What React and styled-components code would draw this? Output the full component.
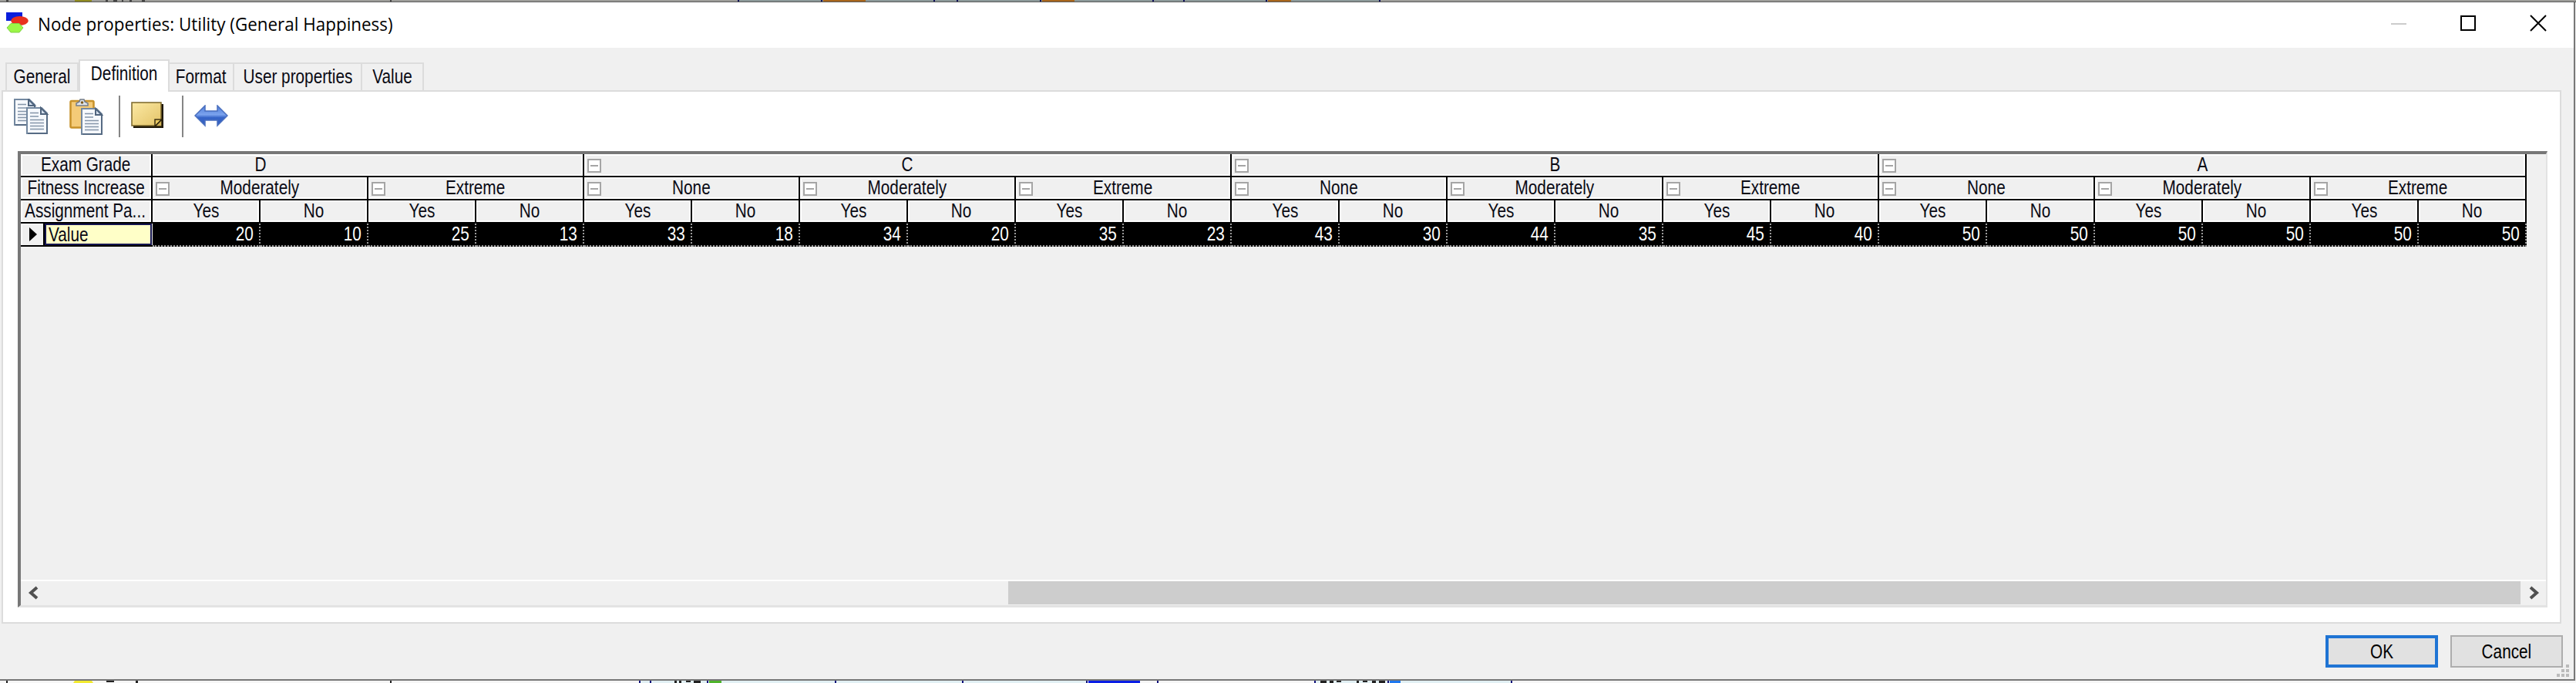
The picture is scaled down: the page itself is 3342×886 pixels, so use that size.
import React from "react";
import styled, { createGlobalStyle } from "styled-components";

const Global = createGlobalStyle`
  *, *::before, *::after { box-sizing: border-box; }
  body { margin: 0; background: #f0f0f0; font-family: "Liberation Sans", Arial, sans-serif; font-size: 25px; line-height: 26px; color: #0a0a14; }
`;

const Screen = styled.div`
  width: 3342px;
  height: 886px;
  display: flex;
  flex-direction: column;
  overflow: hidden;
`;

const Strip = styled.div`
  height: 3px;
  flex: none;
  background: ${(p) => p.$bg};
  overflow: hidden;
  svg { display: block; }
`;

const Window = styled.div`
  flex: 1;
  min-height: 0;
  width: 3341px;
  display: flex;
  flex-direction: column;
  background: #f0f0f0;
  border-right: 2px solid #777;
  border-bottom: 2px solid #777;
`;

const Text = styled.span`
  display: inline-block;
  white-space: pre;
  transform: scaleX(${(p) => p.$sx || 0.83});
  transform-origin: ${(p) => p.$origin || "center"} center;
`;

const TitleBar = styled.header`
  height: 59px;
  flex: none;
  display: flex;
  align-items: center;
  background: #fff;
  padding: 0 35px 5px 7px;
`;

const Title = styled.h1`
  margin: 2px auto 0 12px;
  width: 480px;
  font: 400 24px/34px "Open Sans", sans-serif;
  color: #000;
`;

const Controls = styled.div`
  display: flex;
  gap: 70px;
  svg { display: block; }
`;

const Tabs = styled.nav`
  height: 55px;
  flex: none;
  display: flex;
  align-items: flex-end;
  padding-left: 7px;
`;

const Tab = styled.div`
  width: ${(p) => p.$w}px;
  height: ${(p) => (p.$active ? 42 : 36)}px;
  margin-bottom: ${(p) => (p.$active ? -2 : 0)}px;
  padding-top: 3px;
  position: relative;
  display: flex;
  justify-content: center;
  background: ${(p) => (p.$active ? "#fff" : "#f0f0f0")};
  border: 2px solid #dcdcdc;
  border-bottom: 0;
  border-left-width: ${(p) => (p.$first || p.$active ? 2 : 0)}px;
`;

const Panel = styled.main`
  width: 3321px;
  height: 692px;
  flex: none;
  margin-left: 2px;
  display: flex;
  flex-direction: column;
  background: #fff;
  border: 2px solid #dcdcdc;
`;

const Toolbar = styled.div`
  height: 77px;
  flex: none;
  display: flex;
  align-items: flex-start;
  padding: 5px 0 0 14px;
`;

const Tool = styled.div`
  margin: ${(p) => p.$drop}px ${(p) => p.$after || 0}px 0 0;
  svg { display: block; }
`;

const Sep = styled.div`
  width: 2px;
  height: 54px;
  background: #858585;
  margin: 0 14px 0 ${(p) => p.$l}px;
`;

const Frame = styled.section`
  width: 3282px;
  height: 592px;
  margin-left: 19px;
  display: flex;
  flex-direction: column;
  justify-content: space-between;
  border: solid;
  border-width: 4px 2px 3px 4px;
  border-color: #777 #e3e3e3 #e3e3e3 #777;
  background: #f0f0f0;
`;

const Sheet = styled.div`
  width: 3251px;
  display: grid;
  grid-template-columns: 171px repeat(22, 140px);
  grid-template-rows: repeat(4, 30px);
`;

const HeadCell = styled.div`
  grid-column: span ${(p) => p.$span || 1};
  display: grid;
  grid-template-areas: "cell";
  grid-template-columns: 100%;
  align-items: start;
  justify-items: center;
  border-right: 2px solid #000;
  border-bottom: 2px solid #000;
  box-shadow: inset 2px 2px #fff, inset -2px -2px #fff;
  padding-right: ${(p) => p.$tail || 0}px;
  > * { grid-area: cell; }
`;

const Toggle = styled.i`
  justify-self: start;
  width: 18px;
  height: 18px;
  margin: 6px 0 0 4px;
  border: 2px solid #a5a5a5;
  background: #fff;
  display: grid;
  place-items: center;
  &::before { content: ""; width: 10px; height: 2px; background: #a5a5a5; }
`;

const RowHead = styled.div`
  display: flex;
  border-bottom: 2px solid #000;
`;

const Marker = styled.div`
  width: 31px;
  display: grid;
  place-items: center;
  padding-left: 2px;
  border-right: 2px solid #000;
  box-shadow: inset 2px 2px #fff;
`;

const RowName = styled.div`
  flex: 1;
  background: #ffffc8;
  border: 2px solid #141450;
  margin-right: 1px;
  padding-left: 3px;
  line-height: 24px;
`;

const ValueCell = styled.div`
  background: #000;
  color: #fff;
  text-align: right;
  padding-right: 7px;
  line-height: 27px;
  border-right: 2px dotted #999;
  border-bottom: 2px dotted #999;
`;

const ScrollBar = styled.div`
  height: 33px;
  display: flex;
  align-items: center;
  border-top: 2px solid #fff;
  padding-bottom: 1px;
  svg { display: block; flex: none; }
`;

const Thumb = styled.div`
  width: 1962px;
  height: 30px;
  background: #cdcdcd;
  margin: 0 11px 0 auto;
`;

const Footer = styled.footer`
  flex: 1;
  display: flex;
  align-items: flex-start;
  justify-content: flex-end;
  padding: 15px 6px 0 0;
`;

const Button = styled.button`
  width: 146px;
  height: 42px;
  margin-right: ${(p) => p.$gap || 0}px;
  padding: 0;
  border: ${(p) => (p.$primary ? "4px solid #1f74d4" : "2px solid #adadad")};
  background: #e1e1e1;
  font: inherit;
  color: #000;
`;

const Grip = styled.svg`
  margin: 38px 0 0 -8px;
`;

const Line = styled.path`
  fill: none;
  stroke: ${(p) => p.$c};
  stroke-width: ${(p) => p.$w || 2};
`;

const AppIcon = () => (
  <svg width="30" height="32" viewBox="0 0 30 32">
    <rect x="1" y="2" width="21" height="11" fill="#0a1edc" />
    <ellipse cx="18.500" cy="13" rx="11.300" ry="6" fill="#e8301e" />
    <path d="M7 16.500h11l5 5.500-5 6H7l-5-6z" fill="#9bf646" stroke="#7fd046" />
  </svg>
);

const Page = ({ x, y }) => (
  <g transform={`translate(${x} ${y})`}>
    <path d="M1 1h19l7 7v26H1z" fill="#f6f9fd" stroke="#7388a0" strokeWidth="2" />
    <path d="M27 8v26H2" fill="none" stroke="#566b84" strokeWidth="2" />
    <path d="M19 1v8h8z" fill="#d5e1ee" stroke="#50657e" strokeWidth="2" />
    <path d="M5 7.500h11M5 12h11M5 16.500h18M5 20.500h18M5 24.500h18M5 28.500h18" stroke="#8495a9" strokeWidth="1.500" />
  </g>
);

const CopyIcon = () => (
  <svg width="46" height="48" viewBox="0 0 46 48">
    <Page x={0} y={0} />
    <Page x={16} y={11} />
  </svg>
);

const PasteIcon = () => (
  <svg width="44" height="48" viewBox="0 0 44 48">
    <rect x="1.500" y="3" width="30" height="34.500" rx="1.500" fill="#f4cb78" stroke="#c8922a" strokeWidth="2.500" />
    <path d="M9 9V6l4-2 1-3h5l1 3 4 2v3z" fill="#dfe4ea" stroke="#737c89" strokeWidth="1.500" />
    <circle cx="16.500" cy="5" r="1.800" fill="#7a5a20" />
    <Page x={15} y={12} />
  </svg>
);

const NoteIcon = () => (
  <svg width="44" height="36" viewBox="0 0 44 36">
    <defs>
      <linearGradient id="note" x1="0" y1="0" x2="1" y2="1">
        <stop offset="0" stopColor="#fbe9a4" />
        <stop offset="1" stopColor="#e3c368" />
      </linearGradient>
    </defs>
    <path d="M3 3h39v31H3z" fill="#1c1608" />
    <path d="M1 1h38v30H1z" fill="url(#note)" stroke="#7a6528" strokeWidth="1.500" />
    <path d="M31 32v-9h9z" fill="#e8c860" stroke="#3c3010" strokeWidth="1.500" />
    <path d="M31 32l9-9v9z" fill="#d3b458" stroke="#2c230c" strokeWidth="1.500" />
  </svg>
);

const ArrowIcon = () => (
  <svg width="44" height="30" viewBox="0 0 44 30">
    <defs>
      <linearGradient id="arrow" x1="0" y1="0" x2="0" y2="1">
        <stop offset="0" stopColor="#4f7cd8" />
        <stop offset="0.450" stopColor="#7ba3ee" />
        <stop offset="0.600" stopColor="#3664c8" />
        <stop offset="1" stopColor="#3460c0" />
      </linearGradient>
    </defs>
    <path d="M1 14L14 1v7h16V1l13 13-13 13v-7H14v7z" fill="url(#arrow)" stroke="#4a6fbe" strokeWidth="1.500" />
  </svg>
);

const Head = ({ children, toggle, ...rest }) => (
  <HeadCell {...rest}>
    {toggle && <Toggle />}
    <Text>{children}</Text>
  </HeadCell>
);

const grades = ["C", "B", "A"];
const fitness = ["Moderately", "Extreme"].concat(...grades.map(() => ["None", "Moderately", "Extreme"]));
const values = [20, 10, 25, 13, 33, 18, 34, 20, 35, 23, 43, 30, 44, 35, 45, 40, 50, 50, 50, 50, 50, 50];
const tabs = [["General", 95], ["Definition", 118], ["Format", 84], ["User properties", 166], ["Value", 80]];
const topEdges = [957, 1065, 1211, 1241, 1349, 1495, 1535, 1642, 1789];
const bottomEdges = [829, 843, 917, 1083, 1248, 1409, 1501, 1705, 1800, 1960];

export default function App() {
  return (
    <>
      <Global />
      <Screen>
        <Strip $bg="#9c9c99">
          <svg width="3342" height="3">
            <path d="M957 0h832v2H957z" fill="#8b9999" />
            <path d="M1068 0h55v2h-55zM1352 0h42v2h-42zM1645 0h30v2h-30z" fill="#a8651c" />
            <path d="M97 0h22v2H97z" fill="#8f8a20" />
            <path d="M8 0h3v2H8zM137 0h3v2h-3zM147 0h5v2h-5zM158 0h2v2h-2zM168 0h3v2h-3zM184 0h4v2h-4zM506 0h2v2h-2z" fill="#444" />
            {topEdges.map((x) => <rect key={x} x={x} width="2" height="2" fill="#10105a" />)}
            <path d="M0 2h3342v1H0z" fill="#5c5c5c" />
          </svg>
        </Strip>
        <Window>
          <TitleBar>
            <AppIcon />
            <Title><Text $sx={0.934} $origin="left">Node properties: Utility (General Happiness)</Text></Title>
            <Controls>
              <svg width="20" height="22"><Line $c="#ccc" d="M0 12h20" /></svg>
              <svg width="20" height="22"><Line $c="#000" d="M1 2h18v18H1z" /></svg>
              <svg width="22" height="22"><Line $c="#000" d="M1 1l20 20M21 1L1 21" /></svg>
            </Controls>
          </TitleBar>
          <Tabs>
            {tabs.map(([name, w], i) => (
              <Tab key={name} $w={w} $first={i === 0} $active={i === 1}><Text>{name}</Text></Tab>
            ))}
          </Tabs>
          <Panel>
            <Toolbar>
              <Tool $drop={4} $after={26}><CopyIcon /></Tool>
              <Tool $drop={4}><PasteIcon /></Tool>
              <Sep $l={20} />
              <Tool $drop={8}><NoteIcon /></Tool>
              <Sep $l={22} />
              <Tool $drop={12}><ArrowIcon /></Tool>
            </Toolbar>
            <Frame>
              <Sheet>
                <Head>Exam Grade</Head>
                <Head $span={4} $tail={278}>D</Head>
                {grades.map((g) => <Head key={g} $span={6} toggle>{g}</Head>)}
                <Head>Fitness Increase</Head>
                {fitness.map((f, i) => <Head key={i} $span={2} toggle>{f}</Head>)}
                <Head $tail={2}>Assignment Pa...</Head>
                {values.map((_, i) => <Head key={i}>{i % 2 ? "No" : "Yes"}</Head>)}
                <RowHead>
                  <Marker><svg width="10" height="18"><path d="M0 0l10 9-10 9z" /></svg></Marker>
                  <RowName><Text $origin="left">Value</Text></RowName>
                </RowHead>
                {values.map((v, i) => <ValueCell key={i}><Text $origin="right">{v}</Text></ValueCell>)}
              </Sheet>
              <ScrollBar>
                <svg width="30" height="18"><Line $c="#505050" $w="4" d="M21 2l-8 7 8 7" /></svg>
                <Thumb />
                <svg width="22" height="18"><Line $c="#505050" $w="4" d="M2 2l8 7-8 7" /></svg>
              </ScrollBar>
            </Frame>
          </Panel>
          <Footer>
            <Button $primary $gap={16}><Text>OK</Text></Button>
            <Button><Text>Cancel</Text></Button>
            <Grip width="16" height="16">
              <path d="M12 0h4v4h-4zM6 6h4v4H6zM12 6h4v4h-4zM0 12h4v4H0zM6 12h4v4H6zM12 12h4v4h-4z" fill="#bababa" />
            </Grip>
          </Footer>
        </Window>
        <Strip $bg="#f6f6f6">
          <svg width="3342" height="3">
            <path d="M829 0h580v3H829zM1705 0h255v3h-255z" fill="#e2f0f4" />
            <path d="M1412 0h67v3h-67z" fill="#0a1ee6" />
            <path d="M1803 0h14v3h-14z" fill="#1e78f0" />
            <path d="M920 0h16v3h-16z" fill="#4fb52c" />
            <path d="M97 0h22l2 3H95z" fill="#f2ea30" />
            <path d="M8 0h2v3H8zM138 0h10v2h-10zM176 0h3v3h-3zM506 0h2v3h-2zM875 0h3v3h-3zM881 0h3v3h-3zM890 0h6v2h-6zM900 0h9v3h-9zM1713 0h8v3h-8zM1725 0h5v3h-5zM1734 0h6v2h-6zM1760 0h3v3h-3zM1768 0h6v2h-6zM1780 0h5v3h-5zM1789 0h8v3h-8z" fill="#222" />
            {bottomEdges.map((x) => <rect key={x} x={x} width="2" height="3" fill="#10107a" />)}
          </svg>
        </Strip>
      </Screen>
    </>
  );
}
